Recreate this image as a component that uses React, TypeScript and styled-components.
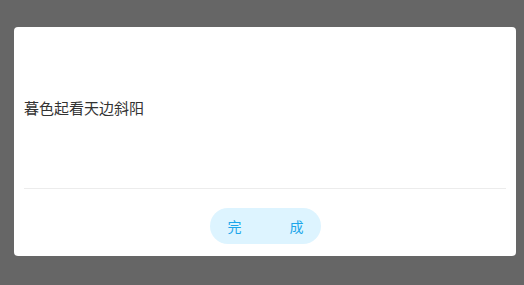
import styled, { createGlobalStyle } from "styled-components";

const GlobalStyle = createGlobalStyle`
  html, body {
    margin: 0;
    padding: 0;
    background-color: #666666;
  }
  body {
    font-family: "Noto Sans CJK SC", "Noto Sans", sans-serif;
  }
`;

const Page = styled.div`
  width: 524px;
  height: 285px;
  padding: 27px 8px 29px 14px;
  box-sizing: border-box;
  display: flex;
`;

const Dialog = styled.div`
  flex: 1;
  display: flex;
  flex-direction: column;
  background-color: #fff;
  border-radius: 4px;
  padding: 0 10px;
`;

const Content = styled.div`
  height: 161px;
  display: flex;
  align-items: center;
  border-bottom: 1px solid #ececec;
`;

const Message = styled.span`
  font-size: 15px;
  color: #333;
  line-height: 20px;
`;

const Footer = styled.div`
  flex: 1;
  display: flex;
  justify-content: center;
  padding-top: 19px;
`;

const DoneButton = styled.button`
  width: 111px;
  height: 36px;
  border: none;
  border-radius: 18px;
  background-color: #ddf4ff;
  color: #1ba6ea;
  font-family: "Noto Sans CJK SC", sans-serif;
  font-size: 14px;
  display: flex;
  justify-content: space-between;
  align-items: center;
  padding: 0 17px 0 18px;
  cursor: pointer;
`;

const App = () => {
  return (
    <>
      <GlobalStyle />
      <Page>
        <Dialog>
          <Content>
            <Message>暮色起看天边斜阳</Message>
          </Content>
          <Footer>
            <DoneButton>
              <span>完</span>
              <span>成</span>
            </DoneButton>
          </Footer>
        </Dialog>
      </Page>
    </>
  );
};

export default App;
